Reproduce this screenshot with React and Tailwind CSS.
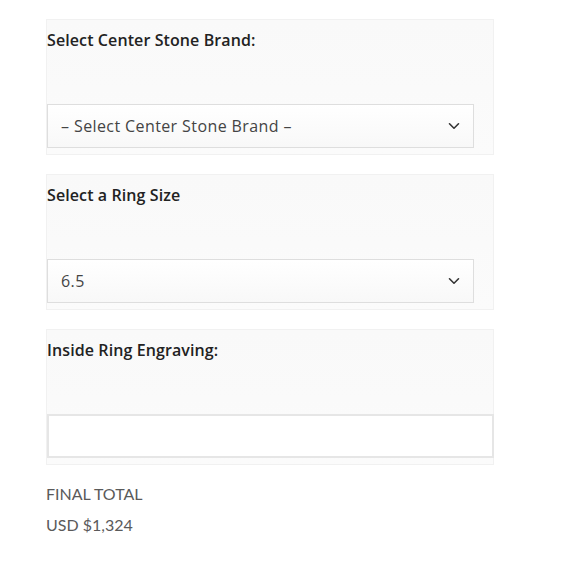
import React from 'react';

const Chevron = () => (
  <svg width="14" height="14" viewBox="0 0 14 14" fill="none" className="shrink-0">
    <path d="M2.5 4.8 L7 9.2 L11.5 4.8" stroke="#333" strokeWidth="1.6" strokeLinecap="round" strokeLinejoin="round" />
  </svg>
);

const Field = ({ label, children }) => (
  <div className="w-[448px] h-[136px] border border-[#f1f1f1] bg-gradient-to-b from-[#f9f9f9] to-[#fbfbfb] flex flex-col">
    <div className="h-[84px] pt-[8px] text-[16px] font-semibold text-[#222] tracking-[0.1px] leading-[24px]" style={{ fontFamily: '"Open Sans", sans-serif' }}>{label}</div>
    {children}
  </div>
);

const SelectBox = ({ value }) => (
  <div className="w-[427px] h-[44px] border border-[#dedede] bg-gradient-to-b from-white to-[#f8f8f8] flex items-center justify-between pl-[13px] pr-[12px] text-[16px] tracking-[0.4px] text-[#444]" style={{ fontFamily: '"Open Sans", sans-serif' }}>
    <span>{value}</span>
    <Chevron />
  </div>
);

export default function App() {
  return (
    <div className="min-h-screen bg-white pt-[19px] pl-[46px]" style={{ fontFamily: 'Lato, "Noto Sans", sans-serif' }}>
      <div className="flex flex-col gap-[19px]">
        <Field label="Select Center Stone Brand:">
          <SelectBox value="– Select Center Stone Brand –" />
        </Field>
        <Field label="Select a Ring Size">
          <SelectBox value="6.5" />
        </Field>
        <Field label="Inside Ring Engraving:">
          <input className="w-[447px] h-[44px] border-2 border-[#e6e6e6] bg-white outline-none" />
        </Field>
      </div>
      <div className="mt-[13px] text-[16px] text-[#5a5a5a] leading-[31px]">
        <div>FINAL TOTAL</div>
        <div>USD $1,324</div>
      </div>
    </div>
  );
}
